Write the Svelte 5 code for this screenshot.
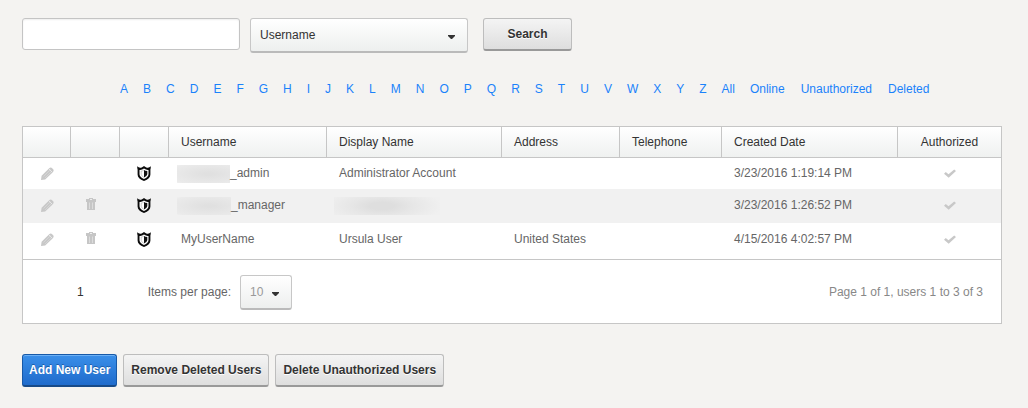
<script>
  const letters = 'ABCDEFGHIJKLMNOPQRSTUVWXYZ'.split('');
  const filters = [...letters, 'All', 'Online', 'Unauthorized', 'Deleted'];
  const users = [
    { hidden: 53, suffix: '_admin', display: 'Administrator Account', address: '', created: '3/23/2016 1:19:14 PM', removable: false },
    { hidden: 54, suffix: '_manager', display: '', address: '', created: '3/23/2016 1:26:52 PM', removable: true },
    { hidden: 0, suffix: 'MyUserName', display: 'Ursula User', address: 'United States', created: '4/15/2016 4:02:57 PM', removable: true }
  ];
  let query = $state('');
  let field = $state('Username');
  let size = $state('10');
</script>

{#snippet caret()}
  <svg class="caret" width="7" height="4" viewBox="0 0 7 4" aria-hidden="true"><path d="M0 0h7v1L4 4H3L0 1z" fill="#333" /></svg>
{/snippet}

<main>
  <form class="search" onsubmit={(e) => e.preventDefault()}>
    <input class="query" type="text" aria-label="Search users" bind:value={query} />
    <div class="select field">
      <select aria-label="Search by" bind:value={field}>
        <option>Username</option>
      </select>
      {@render caret()}
    </div>
    <button class="btn submit" type="submit">Search</button>
  </form>

  <nav aria-label="Filter users">
    {#each filters as f}<a class:word={f.length > 3} href="#{f}">{f}</a>{/each}
  </nav>

  <section class="grid">
    <table>
      <colgroup>
        <col class="c-first" /><col class="c-icon" /><col class="c-icon" />
        <col class="c-user" /><col class="c-display" /><col class="c-address" />
        <col class="c-phone" /><col class="c-date" /><col class="c-auth" />
      </colgroup>
      <thead>
        <tr>
          <th aria-label="Edit"></th>
          <th aria-label="Delete"></th>
          <th aria-label="Permissions"></th>
          <th>Username</th>
          <th>Display Name</th>
          <th>Address</th>
          <th>Telephone</th>
          <th>Created Date</th>
          <th class="center">Authorized</th>
        </tr>
      </thead>
      <tbody>
        {#each users as u}
          <tr>
            <td class="icon">
              <button class="tool" aria-label="Edit">
                <svg width="13" height="13" viewBox="0 0 13 13"><path d="M0 13 .6 8.800 8.200 1.200Q9.800-.3 11.400 1.400L12 2Q13.400 3.600 11.800 5.200L4.200 12.500z" fill="#c8c8c8" /><path d="M2.500 9.500 9.500 2.500M4 11l7-7" stroke="#dedede" stroke-width=".6" fill="none" /><path d="m8 2 3.300 3.300" stroke="#eee" stroke-width=".8" /></svg>
              </button>
            </td>
            <td class="icon bin">
              {#if u.removable}
                <button class="tool" aria-label="Delete">
                  <svg width="10" height="12" viewBox="0 0 10 12"><path d="M3 0h4v1h3v3H9v8H1V4H0V1h3z" fill="#c6c6c6" /><path d="M4 1h2v1H4z" fill="#eee" /><path d="M3.500 4.500V11M6.500 4.500V11" stroke="#dcdcdc" /></svg>
                </button>
              {/if}
            </td>
            <td class="icon">
              <button class="tool" aria-label="Permissions">
                <svg width="14" height="15" viewBox="0 0 14 15"><path d="M.2.3Q2.300 2.500 4.700 1.400Q6 .9 7 .1Q8 .9 9.300 1.400Q11.700 2.500 13.800.3Q13.900 2 13.400 3.500V8.500Q13.400 12.600 7 15Q.6 12.600.6 8.500V3.500Q.1 2 .2.3z" fill="#0b0b0b" /><path d="M2.500 4Q4.800 4.300 7 2.600Q9.200 4.300 11.500 4V8.200Q11.500 11 7 12.900Q2.500 11 2.500 8.200z" fill="#fff" /><path d="M7 4Q8.300 5 10.300 5V8.300Q10 10.200 7 11.500z" fill="#111" /><path d="M7 4Q5.700 5 4.200 5V8.300Q4.500 10.200 7 11.500" fill="none" stroke="#aaa" stroke-width=".6" /></svg>
              </button>
            </td>
            <td class:masked={u.hidden}>
              {#if u.hidden}<span class="mask" style="width: {u.hidden}px"></span>{/if}{u.suffix}
            </td>
            <td>
              {#if u.display}{u.display}{:else}<span class="mask wide"></span>{/if}
            </td>
            <td>{u.address}</td>
            <td></td>
            <td>{u.created}</td>
            <td class="icon">
              <svg width="12" height="9" viewBox="0 0 12 9" role="img" aria-label="Authorized"><path d="M0 4.800 1.800 3 4.500 5.200 10.200.4 12 2 4.700 8.800z" fill="#c8c8c8" /></svg>
            </td>
          </tr>
        {/each}
      </tbody>
    </table>
    <footer>
      <span class="page">1</span>
      <label for="size">Items per page:</label>
      <div class="select size">
        <select id="size" bind:value={size}>
          <option>10</option>
        </select>
        {@render caret()}
      </div>
      <span class="summary">Page 1 of 1, users 1 to 3 of 3</span>
    </footer>
  </section>

  <div class="actions">
    <button class="btn primary">Add New User</button>
    <button class="btn">Remove Deleted Users</button>
    <button class="btn">Delete Unauthorized Users</button>
  </div>
</main>

<style>
  :global(body) { margin: 0; background: #f4f3f1; }
  main {
    padding: 18px 26px 20px 22px;
    font: 12px/16px "Liberation Sans", Arial, sans-serif;
    color: #666;
  }
  input, select, button { font: inherit; box-sizing: border-box; margin: 0; }
  .search { display: flex; align-items: flex-start; }
  .query {
    width: 218px; height: 32px; padding: 0 8px;
    border: 1px solid #c4c4c4; border-radius: 3px; background: #fff;
    box-shadow: inset 0 1px 2px #eee;
  }
  .select { display: grid; align-items: center; }
  .select select {
    grid-area: 1 / 1; width: 100%; height: 35px; padding: 0 9px;
    appearance: none; color: #333;
    border: 1px solid #c7c7c7; border-bottom: 2px solid #bababa; border-radius: 3px;
    background: linear-gradient(#fff, #edefee);
  }
  .caret { grid-area: 1 / 1; justify-self: end; margin: 2px 13px 0 0; pointer-events: none; }
  .field { width: 218px; margin: 0 15px 0 10px; }
  .btn {
    height: 33px; padding: 0 7px;
    font-weight: bold; color: #333; text-shadow: 0 1px 0 #fff;
    border: 1px solid #bdbdbd; border-bottom: 2px solid #999; border-radius: 3px;
    background: linear-gradient(#f4f4f4, #dedede);
  }
  .submit { width: 89px; }
  .primary {
    padding: 0 6px;
    color: #fff; text-shadow: 0 -1px 0 #1c5ca8;
    border-color: #1759a8 #1759a8 #174a88;
    background: linear-gradient(#3a8fe9, #1f6bcc);
    box-shadow: inset 0 1px 0 #6cb0f5;
  }
  nav { display: flex; flex-wrap: wrap; gap: 4px 15px; padding: 28px 0 29px 98px; }
  a { color: #1a82fb; text-decoration: none; }
  .word { padding-right: 1px; }
  .grid { border: 1px solid #c6c6c6; background: #fff; }
  table { width: 100%; table-layout: fixed; border-collapse: separate; border-spacing: 0; }
  .c-first { width: 47px; }
  .c-icon { width: 49px; }
  .c-user { width: 158px; }
  .c-display { width: 175px; }
  .c-address { width: 118px; }
  .c-phone { width: 102px; }
  .c-date { width: 176px; }
  .c-auth { width: 104px; }
  th {
    height: 30px; padding: 0 12px; font-weight: normal; text-align: left; color: #333;
    border-bottom: 1px solid #c6c6c6; border-left: 1px solid #c6c6c6;
    background: linear-gradient(#fff, #eff1f0);
  }
  th:first-child { border-left: 0; }
  th.center { text-align: center; }
  td { height: 26px; padding: 8px 0 0 13px; vertical-align: top; }
  tr:first-child td { height: 24px; padding-top: 7px; }
  tr:last-child td { height: 28px; border-bottom: 1px solid #c6c6c6; }
  tr:nth-child(even) td { background: #f1f1f1; }
  tbody td.icon { padding-left: 1px; text-align: center; line-height: 16px; }
  td.icon svg { display: inline-block; vertical-align: middle; }
  tbody td.bin { padding-right: 8px; line-height: 12px; }
  .tool { padding: 0; border: 0; background: none; line-height: inherit; cursor: pointer; }
  td.masked { padding-left: 9px; }
  .mask {
    display: inline-block; height: 18px; margin: -3px 0; vertical-align: middle;
    background: radial-gradient(ellipse at 60% 50%, #e0e0e0 10%, #ebebeb 90%, #f0f0f0);
  }
  .wide {
    width: 106px; margin-left: -5px;
    background: radial-gradient(ellipse 60px 18px at 45% 50%, #dedede 20%, #e6e6e6 50%, #f0f0f0);
  }
  footer { display: flex; align-items: center; min-height: 63px; padding: 0 18px 0 54px; }
  .page { color: #333; margin-right: 64px; }
  .size { width: 52px; margin: 2px 0 0 9px; }
  .size select { color: #999; }
  .summary { margin-left: auto; color: #888; }
  .actions { display: flex; flex-wrap: wrap; gap: 6px; margin-top: 30px; }
</style>
